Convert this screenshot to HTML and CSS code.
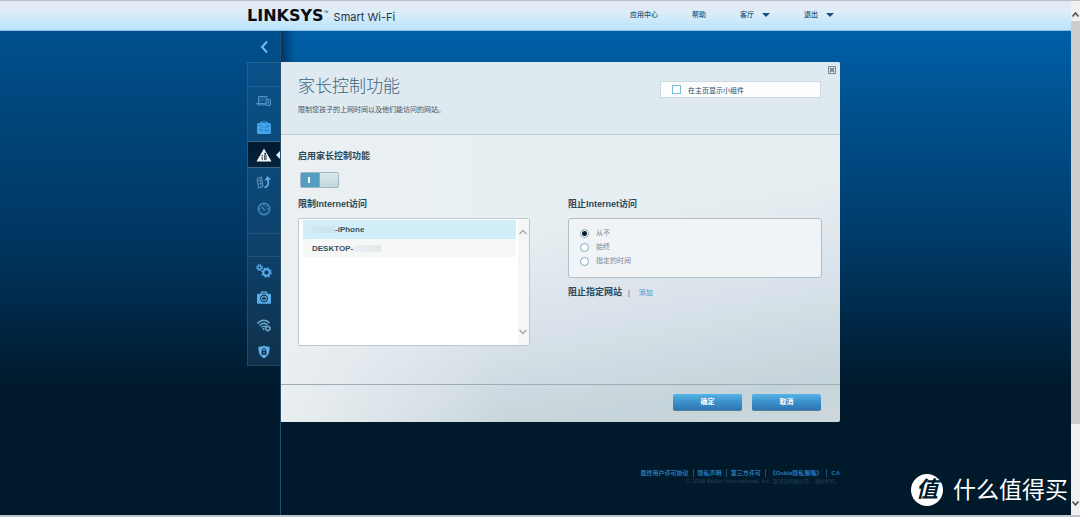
FILE: index.html
```
<!DOCTYPE html>
<html lang="zh-CN">
<head>
<meta charset="utf-8">
<title>Linksys Smart Wi-Fi</title>
<link rel="stylesheet" href="styles.css">
</head>
<body>
<div class="window">
  <div class="view">
    <header class="top">
      <div class="top-inner">
        <div class="brand"><span class="brand-name">LINKSYS</span><sup class="brand-tm">™</sup><span class="brand-sub">Smart Wi-Fi</span></div>
        <nav class="nav">
          <a href="#apps">应用中心</a>
          <a href="#help">帮助</a>
          <button type="button">客厅<span class="caret"></span></button>
          <button type="button">退出<span class="caret"></span></button>
        </nav>
      </div>
    </header>
    <main class="stage">
      <aside class="side">
        <div class="rail">
          <button class="back" type="button" aria-label="返回"><svg width="10" height="14" viewBox="0 0 10 14"><path d="M8 1.500 3 7l5 5.500" fill="none" stroke="#76b9ec" stroke-width="2"/></svg></button>
          <div class="rail-menu">
            <div class="rail-cap"></div>
            <div class="rail-group">
              <a class="rail-item" href="#devices" aria-label="设备列表"><svg width="16" height="14" viewBox="0 0 16 14"><path d="M2.500 9V2.500H11V5M0.500 9.500H9.500V11H2z" fill="#245f91" stroke="#4a94cc"/><rect x="10" y="5.500" width="4.500" height="6" rx=".5" fill="#245f91" stroke="#4a94cc"/><path d="M12.200 7v2.500" stroke="#4a94cc"/></svg></a>
              <a class="rail-item" href="#guest" aria-label="访客访问"><svg width="16" height="14" viewBox="0 0 16 14"><path d="M5 2.500V1h6v1.500" fill="none" stroke="#3f9fe6" stroke-width="1.200"/><rect x="1" y="2" width="14" height="11" rx="1.500" fill="#45a3ea"/><path d="M4 3.500v1.500M12 4v2M6 6.500l1-1M9.500 5.500l1 1M5.500 10l1-1M9 9.500l1 .5M4 8v1M12 9v1.500" stroke="#155c98"/></svg></a>
              <a class="rail-item active" href="#parental" aria-label="家长控制功能"><svg width="16" height="14" viewBox="0 0 16 14"><path d="M8 .5 15.500 13.500H.5z" fill="#f4f8fa"/><circle cx="6.200" cy="7.800" r=".8" fill="#123"/><circle cx="9.200" cy="5.800" r="1" fill="#123"/><path d="M6.200 9v3M8.700 7v5M10 7v5" stroke="#123" stroke-width=".9"/></svg></a>
              <a class="rail-item" href="#priority" aria-label="媒体优先级"><svg width="16" height="14" viewBox="0 0 16 14"><path d="M1 3.500 5.500 2 7 11.500 2.500 13z" fill="#17446c" stroke="#5b9bca"/><path d="m2 6 4-1.200M2.400 9.200l4-1.200M4 3.500l1 8" stroke="#5b9bca" stroke-width=".8"/><path d="M8.500 12.500c3-.5 4.500-3 3.500-7.500" fill="none" stroke="#62abdf" stroke-width="1.800"/><path d="m8.500 5.500 3-4.500 3.500 3.500z" fill="#62abdf"/></svg></a>
              <a class="rail-item" href="#speed" aria-label="速度测试"><svg width="16" height="14" viewBox="0 0 16 14"><circle cx="8" cy="7" r="5.700" fill="#174b78" stroke="#438bc1" stroke-width="1.400"/><path d="m5.500 4.500 3.500 4M8 2.500v1M11.500 7h1M3.500 7h1M10.500 4.500l.7-.7" stroke="#65aee0" stroke-width="1"/></svg></a>
            </div>
            <div class="rail-cap divided"></div>
            <div class="rail-group last">
              <a class="rail-item" href="#settings" aria-label="连接"><svg width="16" height="14" viewBox="0 0 16 14"><circle cx="3.500" cy="3.500" r="1.800" fill="none" stroke="#59b0ee" stroke-width="1.300"/><circle cx="3.500" cy="3.500" r="2.800" fill="none" stroke="#59b0ee" stroke-width="1.200" stroke-dasharray="1.200 1"/><circle cx="10.500" cy="8.500" r="3.200" fill="none" stroke="#59b0ee" stroke-width="1.900"/><circle cx="10.500" cy="8.500" r="4.600" fill="none" stroke="#59b0ee" stroke-width="1.300" stroke-dasharray="1.800 1.810"/></svg></a>
              <a class="rail-item" href="#trouble" aria-label="故障排除"><svg width="16" height="14" viewBox="0 0 16 14"><path d="M5.500 3V1.200h5V3" fill="none" stroke="#64b4ee" stroke-width="1.200"/><rect x="1" y="2.800" width="14" height="10" rx="1" fill="#5aaeea"/><circle cx="8" cy="7.500" r="3.300" fill="#75c0f2" stroke="#0e3250" stroke-width="1.100"/><path d="M8 5.500v4M6 7.500h4" stroke="#0e3250" stroke-width="1.300"/></svg></a>
              <a class="rail-item" href="#wireless" aria-label="无线"><svg width="16" height="14" viewBox="0 0 16 14"><path d="M1.500 5.500C5 1.200 10.500 1.200 13.500 5M3.500 7.500c2.500-3 6-3 8-.5M5.500 9.500c1.500-1.700 3-1.700 4.200-.5" fill="none" stroke="#6fa9d1" stroke-width="1.400"/><circle cx="7.500" cy="11" r="1" fill="#6fa9d1"/><circle cx="11.800" cy="10.500" r="2" fill="none" stroke="#6fa9d1" stroke-width="1.300"/><circle cx="11.800" cy="10.500" r="2.900" fill="none" stroke="#6fa9d1" stroke-width=".8" stroke-dasharray="1 1.270"/></svg></a>
              <a class="rail-item" href="#security" aria-label="安全"><svg width="16" height="14" viewBox="0 0 16 14"><path d="M2.500 1.500Q5 2 8 .8 11 2 13.500 1.500 14.500 10 8 13.500 1.500 10 2.500 1.500z" fill="#5fb2ee"/><path d="M6.500 6V4.800q0-1.300 1.500-1.300t1.500 1.300V6" fill="none" stroke="#0e3250"/><rect x="5.500" y="5.800" width="5" height="4" fill="#0e3250"/><path d="M8 7v1.500" stroke="#7cc4f5"/></svg></a>
            </div>
          </div>
        </div>
      </aside>
      <div class="content">
        <form class="panel">
          <div class="panel-head">
            <div>
              <h1>家长控制功能</h1>
              <p>限制您孩子的上网时间以及他们能访问的网站。</p>
            </div>
            <label class="widget"><input type="checkbox">在主页显示小组件</label>
            <button class="close" type="button" aria-label="关闭"><svg width="8" height="8" viewBox="0 0 8 8"><rect x=".5" y=".5" width="7" height="7" fill="#dce5ea" stroke="#778c99"/><path d="m2 2 4 4M6 2 2 6" stroke="#596f7d" stroke-width="1.200"/></svg></button>
          </div>
          <div class="panel-body">
            <label class="heading" for="enable">启用家长控制功能</label>
            <input class="toggle" id="enable" type="checkbox" checked>
            <div class="columns">
              <section>
                <h2>限制Internet访问</h2>
                <div class="devices">
                  <div class="device-list">
                    <button class="device selected" type="button"><span class="mask short"></span>-iPhone</button>
                    <button class="device" type="button">DESKTOP-<span class="mask long"></span></button>
                  </div>
                  <div class="list-scroll">
                    <svg width="10" height="8" viewBox="0 0 10 8"><path d="M1.500 6 5 2.500 8.500 6" fill="none" stroke="#a9a9a9" stroke-width="1.500"/></svg>
                    <svg width="10" height="8" viewBox="0 0 10 8"><path d="M1.500 2 5 5.500 8.500 2" fill="none" stroke="#a9a9a9" stroke-width="1.500"/></svg>
                  </div>
                </div>
              </section>
              <section>
                <h2>阻止Internet访问</h2>
                <div class="choices">
                  <label><input type="radio" name="block" checked>从不</label>
                  <label><input type="radio" name="block">始终</label>
                  <label><input type="radio" name="block">指定的时间</label>
                </div>
                <div class="sites"><h2>阻止指定网站</h2><span class="bar">|</span><a href="#add">添加</a></div>
              </section>
            </div>
          </div>
          <div class="panel-foot">
            <button class="action" type="button">确定</button>
            <button class="action" type="button">取消</button>
          </div>
        </form>
        <footer class="legal">
          <div class="links"><a href="#eula">最终用户许可协议</a><a href="#privacy">隐私声明</a><a href="#third">第三方许可</a><a href="#ookla">《Ookla隐私策略》</a><a href="#ca">CA</a></div>
          <div class="copy"><span class="owner">© 2018 Belkin International, Inc.</span> 及/或其附属公司。 版权所有。</div>
        </footer>
      </div>
    </main>
    <div class="watermark"><span class="seal">值</span><span>什么值得买</span></div>
  </div>
  <div class="scrollbar">
    <svg width="9" height="20" viewBox="0 0 9 20"><path d="M1.500 15.500 4.500 12l3 3.500" fill="none" stroke="#505050" stroke-width="1.600"/></svg>
    <div class="track"><div class="thumb"></div></div>
    <svg width="9" height="20" viewBox="0 0 9 20"><path d="M1.500 6.500 4.500 10l3-3.500" fill="none" stroke="#505050" stroke-width="1.600"/></svg>
  </div>
</div>
</body>
</html>
```
FILE: styles.css
```
* { box-sizing: border-box; }
body {
  margin: 0;
  font-family: "Liberation Sans", "Noto Sans CJK SC", sans-serif;
  font-size: 7px;
  color: #3d5565;
}
button { border: 0; padding: 0; background: none; font: inherit; color: inherit; cursor: pointer; }
a { color: inherit; text-decoration: none; }
svg { display: block; }
h1, h2, p { margin: 0; }
input { appearance: none; margin: 0; }

.window {
  display: flex;
  min-height: 100vh;
  border-top: 1px solid #b9bfd3;
  border-bottom: 2px solid #bcc4d4;
}
.view { position: relative; flex: 1; min-width: 0; display: flex; flex-direction: column; }

.top, .stage {
  display: grid;
  grid-template-columns: 247fr 34px 559px 231fr;
}
.top {
  height: 30px;
  background: linear-gradient(#e9e9f0, #dcedf9 40%, #b9e3fd);
  border-bottom: 1px solid #8fc0df;
}
.top-inner { grid-column: 2 / 4; display: flex; align-items: center; justify-content: space-between; }
.brand { display: flex; align-items: center; color: #0b0d12; line-height: 20px; }
.brand-name { font: bold 16px/20px "DejaVu Sans", sans-serif; }
.brand-tm { font-size: 5px; line-height: 14px; align-self: flex-start; }
.brand-sub { margin-left: 5px; font: 11px/20px "Inter", sans-serif; color: #26323c; padding-top: 2px; }
.nav { display: flex; gap: 34px; padding: 0 6px 2px 0; line-height: 10px; color: #1d5275; font-weight: 500; }
.nav button { display: flex; align-items: center; gap: 8px; }
.caret { border: 4px solid transparent; border-top-color: #17507c; border-bottom: 0; }

.stage { flex: 1; background: linear-gradient(#005fa8, #00528f 15%, #003c6b 42%, #001a2c 73%); }
.side {
  grid-column: 1 / 3;
  display: flex;
  justify-content: flex-end;
  background: linear-gradient(rgba(0, 20, 40, .2), rgba(0, 20, 40, .12) 50%, transparent 80%);
  border-right: 1px solid #24506f;
}
.rail { width: 33px; }
.back { display: flex; align-items: center; justify-content: center; width: 100%; height: 31px; }
.rail-menu {
  background: linear-gradient(rgba(50, 105, 150, .2), rgba(60, 105, 145, .25));
  border: 1px solid rgba(110, 160, 195, .2);
  border-right: 0;
}
.rail-cap { height: 23px; }
.rail-cap.divided { border-top: 1px solid rgba(110, 160, 195, .2); }
.rail-group { border-top: 1px solid rgba(110, 160, 195, .2); padding-bottom: 11px; }
.rail-group.last { padding-bottom: 0; }
.rail-item { position: relative; height: 27px; display: flex; align-items: center; justify-content: center; }
.rail-item.active { background: linear-gradient(#001a30, #07243b); border: solid #3c6989; border-width: 1px 0; }
.rail-item.active::after {
  content: "";
  position: absolute;
  right: 0;
  border: 4px solid transparent;
  border-right-color: #e7eef2;
  border-left: 0;
}

.content {
  grid-column: 3 / 5;
  padding: 31px 0 28px;
  background: linear-gradient(90deg, rgba(0, 20, 45, .5), transparent 14px);
}
.panel {
  width: 559px;
  border-radius: 0 2px 2px 0;
  background: linear-gradient(90deg, rgba(236, 240, 242, .9), transparent 220px), linear-gradient(170deg, #e8eff2 45%, #d9e2ea 68%, #c5d4da 90%, #cdd8dd);
}
.panel-head {
  position: relative;
  display: flex;
  justify-content: space-between;
  align-items: flex-start;
  height: 73px;
  padding: 12px 19px 0 17px;
  background: #dfe9f0;
  border-bottom: 1px solid #bfcbd2;
  border-radius: 0 2px 0 0;
}
h1 { font-size: 17px; line-height: 26px; font-weight: 300; color: #3c637c; }
.panel-head p { margin-top: 4px; line-height: 11px; }
.widget {
  display: flex;
  align-items: center;
  gap: 7px;
  width: 161px;
  height: 17px;
  margin-top: 7px;
  padding-left: 11px;
  background: #fdfdfd;
  border: 1px solid #cddae1;
  color: #29495c;
}
.widget input { width: 9px; height: 9px; border: 1px solid #76bddb; background: #fff; }
.close { position: absolute; top: 4px; right: 4px; }

.panel-body { height: 249px; padding: 14px 18px 0 17px; }
.heading, h2 { display: block; font-size: 9px; line-height: 14px; font-weight: bold; color: #29485a; }
.toggle {
  display: flex;
  align-items: center;
  justify-content: flex-end;
  width: 39px;
  height: 16px;
  margin: 9px 0 0 2px;
  background: #559dc0;
  border: 1px solid #9db6c2;
  border-radius: 2px;
}
.toggle::before { content: ""; width: 2px; height: 6px; margin-right: 9px; background: #eef8fc; }
.toggle::after { content: ""; width: 18px; height: 14px; background: linear-gradient(#dceaec, #bfd7dc); border-left: 1px solid #8faab6; }
.columns { display: grid; grid-template-columns: 232px 254px; column-gap: 38px; padding-top: 9px; }
.devices {
  display: flex;
  justify-content: space-between;
  height: 128px;
  margin-top: 7px;
  background: #fff;
  border: 1px solid #bac9ce;
  border-radius: 2px;
}
.device-list { width: 217px; padding: 1px 0 0 4px; }
.device { display: flex; align-items: center; width: 100%; height: 18px; padding-left: 9px; background: #f6f7f7; color: #35515f; font-size: 8px; font-weight: bold; }
.device.selected { height: 19px; background: #d2eef9; }
.mask { height: 7px; background: linear-gradient(90deg, rgba(200, 210, 220, .2), rgba(200, 210, 220, .4)); }
.mask.short { width: 23px; }
.mask.long { width: 28px; }
.list-scroll { display: flex; flex-direction: column; justify-content: space-between; width: 11px; padding: 9px 0; background: #f5f6f7; }
.choices {
  display: grid;
  gap: 4px;
  margin-top: 7px;
  padding: 9px 11px 11px;
  background: #f0f4f7;
  border: 1px solid #b1bec6;
  border-radius: 3px;
  color: #798891;
}
.choices label { display: flex; align-items: center; gap: 7px; line-height: 10px; }
.choices input { width: 9px; height: 9px; border: 1px solid #7caac2; border-radius: 50%; background: #fff; }
.choices input:checked { background: radial-gradient(#08172a 2px, #fff 3px); }
.sites { display: flex; align-items: center; margin-top: 7px; }
.bar { margin: 0 9px 0 6px; }
.sites a { color: #3d96cd; }

.panel-foot { display: flex; justify-content: flex-end; gap: 10px; padding: 9px 19px 11px; border-top: 1px solid #9eacb3; }
.action {
  width: 69px;
  height: 17px;
  padding-bottom: 2px;
  background: linear-gradient(#55b4e6, #3e93cc 45%, #2c77b3);
  border-bottom: 1px solid #5e7c92;
  border-radius: 2px;
  color: #fff;
  font-weight: bold;
}
.legal { width: 559px; margin-top: 47px; text-align: right; }
.links { display: flex; justify-content: flex-end; font-size: 6px; line-height: 8px; font-weight: bold; color: #2579b7; }
.links a + a { margin-left: 4px; padding-left: 4px; border-left: 1px solid #1f4f73; }
.copy { font-size: 5px; line-height: 8px; color: #2b4351; }
.owner { font-size: 6px; }

.watermark { position: absolute; right: 3px; bottom: 9px; display: flex; align-items: center; gap: 10px; color: #fff; font-size: 23px; line-height: 32px; }
.seal { width: 32px; border-radius: 50%; background: #fff; color: #001a2c; text-align: center; font-size: 22px; font-weight: bold; font-style: italic; }

.scrollbar { display: flex; flex-direction: column; width: 9px; background: #f0f0f1; }
.track { flex: 1; }
.thumb { height: 85%; background: #cdcdcd; }
```
